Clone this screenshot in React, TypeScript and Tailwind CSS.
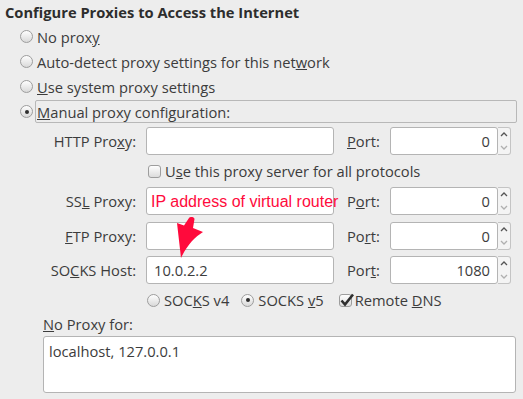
import React from 'react';

const ui = { fontFamily: '"Open Sans", Lato, sans-serif' };

function Radio({ checked }: { checked?: boolean }) {
  return (
    <span className="flex h-[13px] w-[13px] shrink-0 items-center justify-center rounded-full border border-[#9d9d9d] bg-linear-to-b from-[#fefefe] to-[#d9d9d9]">
      {checked && <span className="h-[4px] w-[4px] rounded-full bg-[#2e2e2e]" />}
    </span>
  );
}

function Check({ checked }: { checked?: boolean }) {
  return (
    <span className="relative flex h-[13px] w-[13px] shrink-0 rounded-[3px] border border-[#9d9d9d] bg-linear-to-b from-[#fefefe] to-[#dcdcdc]">
      {checked && (
        <svg className="absolute -left-[1px] -top-[3px]" width="16" height="16" viewBox="0 0 16 16">
          <path d="M2.5 8.5 L6 12.5 L14 2.5" fill="none" stroke="#2e2e2e" strokeWidth="2.6" strokeLinejoin="miter" />
        </svg>
      )}
    </span>
  );
}

function Field({ value, width = 'w-[188px]', right }: { value?: string; width?: string; right?: boolean }) {
  return (
    <div
      className={`flex h-[28px] ${width} items-center rounded-[3px] border border-[#b4b4b4] bg-white px-[7px] text-[#3c3c3c] ${right ? 'justify-end' : ''}`}
    >
      {value}
    </div>
  );
}

function Spin({ value }: { value: string }) {
  return (
    <div className="flex">
      <Field value={value} width="w-[108px]" right />
      <div className="flex h-[28px] w-[13px] flex-col rounded-r-[3px] border border-l-0 border-[#c4c4c4] bg-[#f4f4f4]">
        <svg className="flex-1" viewBox="0 0 12 13" width="12" height="13">
          <path d="M3 8 L6 5 L9 8" fill="none" stroke="#555" strokeWidth="1.3" />
        </svg>
        <svg className="flex-1" viewBox="0 0 12 13" width="12" height="13">
          <path d="M3 5 L6 8 L9 5" fill="none" stroke="#b0b0b0" strokeWidth="1.3" />
        </svg>
      </div>
    </div>
  );
}

function ProxyRow({ label, value, port, className = '' }: { label: React.ReactNode; value?: string; port: string; className?: string }) {
  return (
    <div className={`flex h-[28px] items-center ${className}`}>
      <div className="w-[136px] text-right">{label}</div>
      <div className="ml-[10px]">
        <Field value={value} />
      </div>
      <div className="ml-[13px] w-[43px]">
        {port === '1080' ? <>Por<u>t</u>:</> : port === 'ftp' ? <>Po<u>r</u>t:</> : port === 'ssl' ? <>P<u>o</u>rt:</> : <><u>P</u>ort:</>}
      </div>
      <Spin value={port === '1080' ? '1080' : '0'} />
    </div>
  );
}

export default function App() {
  return (
    <div className="relative h-[399px] w-[523px] overflow-hidden bg-[#ededed] text-[14.7px] leading-[18px] text-[#3c3c3c]" style={ui}>
      <div className="flex h-[24px] items-center pl-[5px] font-bold text-[#2d2d2d]">Configure Proxies to Access the Internet</div>

      <div className="pl-[20px]">
        <div className="flex h-[25px] items-center gap-[4px]">
          <Radio />
          <span>No prox<u>y</u></span>
        </div>
        <div className="flex h-[25px] items-center gap-[4px]">
          <Radio />
          <span>Auto-detect proxy settings for this net<u>w</u>ork</span>
        </div>
        <div className="flex h-[25px] items-center gap-[4px]">
          <Radio />
          <span><u>U</u>se system proxy settings</span>
        </div>
        <div className="flex h-[25px] items-center gap-[2px]">
          <Radio checked />
          <span className="flex h-[23px] w-[482px] items-center rounded-[2px] border border-[#b8b8b8] pl-[1px]"><span><u>M</u>anual proxy configuration:</span></span>
        </div>
      </div>

      <div className="mt-[3px]">
        <ProxyRow label={<>HTTP Pro<u>x</u>y:</>} port="http" />
        <div className="flex h-[32px] items-center gap-[4px] pl-[148px]">
          <Check />
          <span>U<u>s</u>e this proxy server for all protocols</span>
        </div>
        <ProxyRow label={<>SS<u>L</u> Proxy:</>} port="ssl" />
        <ProxyRow label={<><u>F</u>TP Proxy:</>} port="ftp" className="mt-[7px]" />
        <ProxyRow label={<>SO<u>C</u>KS Host:</>} value="10.0.2.2" port="1080" className="mt-[6px]" />
        <div className="flex h-[32px] items-center pl-[147px]">
          <Radio />
          <span className="ml-[4px]">SOC<u>K</u>S v4</span>
          <span className="ml-[12px]"><Radio checked /></span>
          <span className="ml-[4px]">SOCKS <u>v</u>5</span>
          <span className="ml-[15px]"><Check checked /></span>
          <span className="ml-[3px]">Remote <u>D</u>NS</span>
        </div>
        <div className="flex h-[15px] items-center pl-[43px]"><span><u>N</u>o Proxy for:</span></div>
        <div className="ml-[43px] mt-[5px] h-[57px] w-[473px] rounded-[3px] border border-[#b4b4b4] bg-white px-[5px] pt-[5px]">
          localhost, 127.0.0.1
        </div>
      </div>

      {/* annotation drawn over the dialog */}
      <div
        className="absolute left-[151px] top-[192px] text-[16px] leading-[20px] text-[#ff0a3c]"
        style={{ fontFamily: '"Liberation Sans", Arial, sans-serif' }}
      >
        IP address of virtual router
      </div>
      <svg className="absolute left-[170px] top-[212px]" width="40" height="50" viewBox="0 0 40 50">
        <path
          d="M11 46 L7 11 L14 13.5 L19 6 C20 4.5 24 4.5 24.5 7 L23 16 L33 20 C25 25 17 33 11 46 Z"
          fill="#ff0a3c"
        />
      </svg>
    </div>
  );
}
